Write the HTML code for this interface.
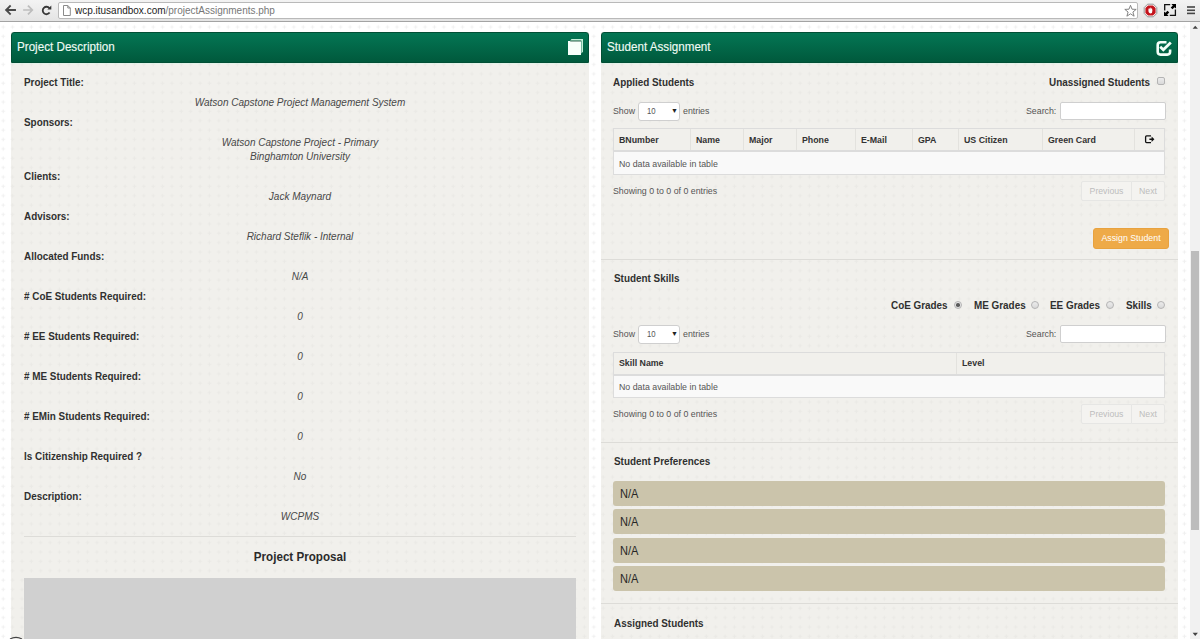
<!DOCTYPE html><html><head><meta charset="utf-8"><style>
*{box-sizing:border-box;margin:0;padding:0}
html,body{width:1200px;height:639px;overflow:hidden;background:#fff;font-family:"Liberation Sans",sans-serif}
.a{position:absolute;white-space:nowrap}
#tb{left:0;top:0;width:1200px;height:22px;background:linear-gradient(#f3f3f3,#e4e4e4);border-bottom:1px solid #a3a3a3}
#url{left:58px;top:2px;width:80px;height:17px;background:#fff;border:1px solid #b9b9b9;border-radius:2px}
.panel{top:32px;height:640px;background:#f1f0ec}
.ph{position:absolute;left:0;top:0;right:0;height:31px;background:linear-gradient(#047654,#00593c);border:1px solid #024f35;border-radius:3px 3px 0 0}
.ph .t{position:absolute;left:5.3px;top:-1px;line-height:29px;font-size:12.8px;color:#effbf4;transform:scaleX(0.91);transform-origin:0 0;-webkit-text-stroke:0.15px #effbf4}
.ph:after{content:"";position:absolute;left:-1px;right:-1px;bottom:-2px;height:1px;background:#e4f3ea}
.lb{font-weight:bold;font-size:10.9px;color:#303030;line-height:20px;height:20px;transform:scaleX(0.908);transform-origin:0 0;margin-top:-1px}
.vl{font-style:italic;font-size:11px;color:#484848;line-height:20px;height:20px;text-align:center;width:552px;left:24px;transform:scaleX(0.909);margin-top:-1px}
.sm{font-size:8.8px;color:#555;line-height:20px;height:20px}
.th{font-weight:bold;font-size:8.8px;color:#333;line-height:20px;height:20px}
.bd{border:1px solid #dcdcdc}
.sel{background:#fff;border:1px solid #cfcfcf;border-radius:3px}
.inp{background:#fff;border:1px solid #cfcfcf;border-radius:2px}
.pg{border:1px solid #e6e6e4;background:#f4f3f0;color:#bdbdbd;font-size:8.7px;line-height:18px;text-align:center}
.hr{height:1px;background:#dddcd8}
.na{background:#cbc4ab;border-radius:3px;font-size:12px;color:#262626;line-height:20px;padding-left:7px}
</style></head><body>
<svg class="a" style="left:0;top:22px" width="1190" height="617"><defs><pattern id="pw" x="0" y="0" width="9.375" height="9.375" patternUnits="userSpaceOnUse"><path d="M3.2 3.2V6.8M1.4 5H5" stroke="#000" stroke-opacity="0.06" stroke-width="1"/></pattern></defs><rect width="1190" height="617" fill="url(#pw)"/></svg>
<div id="tb" class="a"></div>
<div id="url" class="a" style="width:1080px"></div>
<div class="a" style="left:74.5px;top:0px;font-size:10.6px;line-height:20px;color:#222;transform:scaleX(0.943);transform-origin:0 0">wcp.itusandbox.com<span style="color:#777">/projectAssignments.php</span></div>
<svg class="a" style="left:0;top:0" width="60" height="22" viewBox="0 0 60 22"><path d="M10 6.2 L6.2 10 L10 13.8 M6.4 10 H15" fill="none" stroke="#4a4a4a" stroke-width="1.9" stroke-linecap="square"/><path d="M28.5 6.2 L32.3 10 L28.5 13.8 M32 10 H24" fill="none" stroke="#bdbdbd" stroke-width="1.7" stroke-linecap="square"/><path d="M49.4 8.1 A3.75 3.75 0 1 0 49.6 12.6" fill="none" stroke="#383838" stroke-width="1.8"/><path d="M47.4 9.5 L51.3 9.5 L51.3 5.6 Z" fill="#383838"/></svg>
<svg class="a" style="left:62px;top:4px" width="10" height="13" viewBox="0 0 10 13"><path d="M1.5 1.5 H5.8 L8.3 4 V11.5 H1.5 Z M5.8 1.5 V4 H8.3" fill="#fff" stroke="#8a8a8a" stroke-width="1"/></svg>
<svg class="a" style="left:1124px;top:4px" width="14" height="14" viewBox="0 0 14 14"><path d="M6.5 1.3 L8 5.2 L12.2 5.4 L8.9 8 L10.1 12.2 L6.5 9.8 L2.9 12.2 L4.1 8 L0.8 5.4 L5 5.2 Z" fill="#fff" stroke="#777" stroke-width="0.9" stroke-linejoin="round"/></svg>
<svg class="a" style="left:1143px;top:3px" width="15" height="15" viewBox="0 0 15 15"><path d="M4.6 1.2 H10.4 L13.8 4.6 V10.4 L10.4 13.8 H4.6 L1.2 10.4 V4.6 Z" fill="#fff" stroke="#888" stroke-width="0.9"/><path d="M5 2.4 H10 L12.6 5 V10 L10 12.6 H5 L2.4 10 V5 Z" fill="#c4141c"/><path d="M5.4 7 Q5.4 4.8 6.4 5.2 L6.6 6.5 Q6.8 4.2 7.7 4.4 L7.8 6.4 Q8.4 4.8 9 5.3 L9.4 7.5 Q9.6 10.2 7.4 10.4 Q5.4 10.2 5.4 7 Z" fill="#fff"/></svg>
<svg class="a" style="left:1163px;top:3px" width="15" height="15" viewBox="0 0 15 15"><path d="M1.7 7.4 V1.7 H7.2 M12.4 6.6 V12.4 H6.8" fill="none" stroke="#111" stroke-width="1.3"/><path d="M13 1 V5.6 L11.55 4.15 L9.45 6.25 L7.75 4.55 L9.85 2.45 L8.4 1 Z" fill="#000"/><path d="M1 13 V8.4 L2.45 9.85 L4.55 7.75 L6.25 9.45 L4.15 11.55 L5.6 13 Z" fill="#000"/></svg>
<svg class="a" style="left:1186px;top:5px" width="10" height="10" viewBox="0 0 10 10"><rect x="1" y="1.2" width="8" height="1.6" fill="#444"/><rect x="1" y="4.5" width="8" height="1.6" fill="#444"/><rect x="1" y="7.6" width="8" height="1.6" fill="#444"/></svg>
<div class="panel a" style="left:11px;width:578px"><div class="ph"><div class="t">Project Description</div></div></div>
<div class="panel a" style="left:601px;width:577px"><div class="ph"><div class="t">Student Assignment</div></div></div>
<svg class="a" style="left:0;top:62px" width="1190" height="577"><defs><pattern id="pp" x="0" y="-40" width="9.375" height="9.375" patternUnits="userSpaceOnUse"><path d="M3.2 3.2V6.8M1.4 5H5" stroke="#000" stroke-opacity="0.028" stroke-width="1"/></pattern></defs><rect x="11" width="578" height="577" fill="url(#pp)"/><rect x="601" width="577" height="577" fill="url(#pp)"/></svg>
<svg class="a" style="left:566px;top:37px" width="20" height="20" viewBox="0 0 20 20"><path d="M4 3.8 L5.5 2 H17 V14.8 L15.4 16.4 V3.8 Z" fill="#c6efd9"/><rect x="2" y="4" width="13" height="14" fill="#f7fffb"/><rect x="4.2" y="3.6" width="11" height="0.9" fill="#013d27" opacity="0.8"/></svg>
<svg class="a" style="left:1154px;top:38px" width="20" height="20" viewBox="0 0 20 20"><path d="M12.5 4.2 H6.5 Q3.7 4.2 3.7 7 V13.8 Q3.7 16.6 6.5 16.6 H13.3 Q16.1 16.6 16.1 13.8 V11.5" fill="none" stroke="#f3fff8" stroke-width="2.6"/><path d="M6.2 8.8 L9.3 11.8 L16.8 4.4" fill="none" stroke="#f3fff8" stroke-width="2.8"/></svg>
<div class="a lb" style="left:24px;top:73px">Project Title:</div>
<div class="a vl" style="top:93px">Watson Capstone Project Management System</div>
<div class="a lb" style="left:24px;top:113px">Sponsors:</div>
<div class="a vl" style="top:133px">Watson Capstone Project - Primary</div>
<div class="a vl" style="top:147px">Binghamton University</div>
<div class="a lb" style="left:24px;top:167px">Clients:</div>
<div class="a vl" style="top:187px">Jack Maynard</div>
<div class="a lb" style="left:24px;top:207px">Advisors:</div>
<div class="a vl" style="top:227px">Richard Steflik - Internal</div>
<div class="a lb" style="left:24px;top:247px">Allocated Funds:</div>
<div class="a vl" style="top:267px">N/A</div>
<div class="a lb" style="left:24px;top:287px"># CoE Students Required:</div>
<div class="a vl" style="top:307px">0</div>
<div class="a lb" style="left:24px;top:327px"># EE Students Required:</div>
<div class="a vl" style="top:347px">0</div>
<div class="a lb" style="left:24px;top:367px"># ME Students Required:</div>
<div class="a vl" style="top:387px">0</div>
<div class="a lb" style="left:24px;top:407px"># EMin Students Required:</div>
<div class="a vl" style="top:427px">0</div>
<div class="a lb" style="left:24px;top:447px">Is Citizenship Required ?</div>
<div class="a vl" style="top:467px">No</div>
<div class="a lb" style="left:24px;top:487px">Description:</div>
<div class="a vl" style="top:507px">WCPMS</div>
<div class="a hr" style="left:24px;top:536px;width:552px"></div>
<div class="a" style="left:24px;width:552px;top:547px;text-align:center;font-weight:bold;font-size:12.7px;line-height:20px;color:#2a2a2a;transform:scaleX(0.915)">Project Proposal</div>
<div class="a" style="left:24px;top:578px;width:552px;height:70px;background:#d0d0d0"></div>
<div class="a lb" style="left:613px;top:73px">Applied Students</div>
<div class="a lb" style="left:1049px;top:73px">Unassigned Students</div>
<div class="a" style="left:1157px;top:77px;width:8px;height:8px;border:1px solid #b4b4b4;border-radius:2px;background:linear-gradient(#ececec,#d9d9d9)"></div>
<div class="a sm" style="left:613px;top:101px">Show</div>
<div class="a sel" style="left:637.5px;top:102px;width:42.5px;height:19px"></div>
<div class="a" style="left:647px;top:101px;font-size:8.6px;line-height:21px;color:#555;transform:scaleX(0.9);transform-origin:0 0">10</div>
<div class="a" style="left:671px;top:101px;font-size:7px;line-height:20px;color:#222">&#9660;</div>
<div class="a sm" style="left:683px;top:101px">entries</div>
<div class="a sm" style="left:1026px;top:101px">Search:</div>
<div class="a inp" style="left:1060px;top:102px;width:106px;height:18px"></div>
<div class="a bd" style="left:613px;top:128px;width:552px;height:47px;background:#f9f9f9"></div>
<div class="a" style="left:614px;top:129px;width:550px;height:23px;background:#f1f0ec;border-bottom:2px solid #dcdcdc"></div>
<div class="a th" style="left:619px;top:130px">BNumber</div>
<div class="a" style="left:690px;top:129px;width:1px;height:21px;background:#e3e2de"></div>
<div class="a th" style="left:696px;top:130px">Name</div>
<div class="a" style="left:743px;top:129px;width:1px;height:21px;background:#e3e2de"></div>
<div class="a th" style="left:749px;top:130px">Major</div>
<div class="a" style="left:796px;top:129px;width:1px;height:21px;background:#e3e2de"></div>
<div class="a th" style="left:802px;top:130px">Phone</div>
<div class="a" style="left:855px;top:129px;width:1px;height:21px;background:#e3e2de"></div>
<div class="a th" style="left:861px;top:130px">E-Mail</div>
<div class="a" style="left:912px;top:129px;width:1px;height:21px;background:#e3e2de"></div>
<div class="a th" style="left:918px;top:130px">GPA</div>
<div class="a" style="left:958px;top:129px;width:1px;height:21px;background:#e3e2de"></div>
<div class="a th" style="left:964px;top:130px">US Citizen</div>
<div class="a" style="left:1042px;top:129px;width:1px;height:21px;background:#e3e2de"></div>
<div class="a th" style="left:1048px;top:130px">Green Card</div>
<div class="a" style="left:1134px;top:129px;width:1px;height:21px;background:#e3e2de"></div>
<svg class="a" style="left:1143px;top:133px" width="14" height="12" viewBox="0 0 14 12"><path d="M8 2.9 H3.6 Q2.6 2.9 2.6 3.9 V8.6 Q2.6 9.6 3.6 9.6 H8" fill="none" stroke="#111" stroke-width="1.3"/><path d="M6.4 5.4 H8.6 V3.6 L11.4 6.25 L8.6 8.9 V7.1 H6.4 Z" fill="#111"/></svg>
<div class="a sm" style="left:619px;top:154px">No data available in table</div>
<div class="a sm" style="left:613px;top:181px">Showing 0 to 0 of 0 entries</div>
<div class="a pg" style="left:1081px;top:181px;width:51px;height:20px;border-radius:2px 0 0 2px">Previous</div>
<div class="a pg" style="left:1131px;top:181px;width:34px;height:20px;border-radius:0 2px 2px 0">Next</div>
<div class="a" style="left:1093px;top:228px;width:76px;height:21px;background:#eeaa48;border:1px solid #e8a23f;border-radius:3px;color:#fff;font-size:8.8px;line-height:19px;text-align:center">Assign Student</div>
<div class="a hr" style="left:601px;top:259px;width:577px"></div>
<div class="a lb" style="left:614px;top:269px">Student Skills</div>
<div class="a lb" style="left:891px;top:296px">CoE Grades</div>
<div class="a" style="left:954px;top:301px;width:8px;height:8px;border:1px solid #b4b4b4;border-radius:50%;background:linear-gradient(#ececec,#d9d9d9)"></div>
<div class="a" style="left:956.2px;top:303.2px;width:3.6px;height:3.6px;border-radius:50%;background:#5a5a5a"></div>
<div class="a lb" style="left:974px;top:296px">ME Grades</div>
<div class="a" style="left:1031px;top:301px;width:8px;height:8px;border:1px solid #b4b4b4;border-radius:50%;background:linear-gradient(#ececec,#d9d9d9)"></div>
<div class="a lb" style="left:1050px;top:296px">EE Grades</div>
<div class="a" style="left:1106px;top:301px;width:8px;height:8px;border:1px solid #b4b4b4;border-radius:50%;background:linear-gradient(#ececec,#d9d9d9)"></div>
<div class="a lb" style="left:1126px;top:296px">Skills</div>
<div class="a" style="left:1157px;top:301px;width:8px;height:8px;border:1px solid #b4b4b4;border-radius:50%;background:linear-gradient(#ececec,#d9d9d9)"></div>
<div class="a sm" style="left:613px;top:324px">Show</div>
<div class="a sel" style="left:637.5px;top:325px;width:42.5px;height:19px"></div>
<div class="a" style="left:647px;top:324px;font-size:8.6px;line-height:21px;color:#555;transform:scaleX(0.9);transform-origin:0 0">10</div>
<div class="a" style="left:671px;top:324px;font-size:7px;line-height:20px;color:#222">&#9660;</div>
<div class="a sm" style="left:683px;top:324px">entries</div>
<div class="a sm" style="left:1026px;top:324px">Search:</div>
<div class="a inp" style="left:1060px;top:325px;width:106px;height:18px"></div>
<div class="a bd" style="left:613px;top:352px;width:552px;height:46px;background:#f9f9f9"></div>
<div class="a" style="left:614px;top:353px;width:550px;height:23px;background:#f1f0ec;border-bottom:2px solid #dcdcdc"></div>
<div class="a" style="left:956px;top:353px;width:1px;height:21px;background:#e3e2de"></div>
<div class="a th" style="left:619px;top:353px">Skill Name</div>
<div class="a th" style="left:962px;top:353px">Level</div>
<div class="a sm" style="left:619px;top:377px">No data available in table</div>
<div class="a sm" style="left:613px;top:404px">Showing 0 to 0 of 0 entries</div>
<div class="a pg" style="left:1081px;top:404px;width:51px;height:20px;border-radius:2px 0 0 2px">Previous</div>
<div class="a pg" style="left:1131px;top:404px;width:34px;height:20px;border-radius:0 2px 2px 0">Next</div>
<div class="a hr" style="left:601px;top:442px;width:577px"></div>
<div class="a lb" style="left:614px;top:452px">Student Preferences</div>
<div class="a na" style="left:613px;top:481px;width:552px;height:25px;line-height:26px"><span style="display:inline-block;transform:scaleX(0.92);transform-origin:0 0">N/A</span></div>
<div class="a na" style="left:613px;top:509px;width:552px;height:25px;line-height:26px"><span style="display:inline-block;transform:scaleX(0.92);transform-origin:0 0">N/A</span></div>
<div class="a na" style="left:613px;top:538px;width:552px;height:25px;line-height:26px"><span style="display:inline-block;transform:scaleX(0.92);transform-origin:0 0">N/A</span></div>
<div class="a na" style="left:613px;top:566px;width:552px;height:25px;line-height:26px"><span style="display:inline-block;transform:scaleX(0.92);transform-origin:0 0">N/A</span></div>
<div class="a hr" style="left:601px;top:603px;width:577px"></div>
<div class="a lb" style="left:613.5px;top:614px">Assigned Students</div>
<div class="a" style="left:1190px;top:22px;width:10px;height:617px;background:#f1f1f1"></div>
<div class="a" style="left:1191px;top:251px;width:8px;height:279px;background:#bcbcbc"></div>
<svg class="a" style="left:1190px;top:22px" width="10" height="617" viewBox="0 0 10 617"><path d="M2.6 6.8 L7.9 6.8 L5.25 3.8 Z" fill="#444"/><path d="M2.6 610.8 L7.9 610.8 L5.25 613.9 Z" fill="#444"/></svg>
<svg class="a" style="left:7px;top:634px" width="18" height="5" viewBox="0 0 18 5"><path d="M3 5 Q9 1.6 15 5" fill="none" stroke="#444" stroke-width="1.2"/></svg>
</body></html>
